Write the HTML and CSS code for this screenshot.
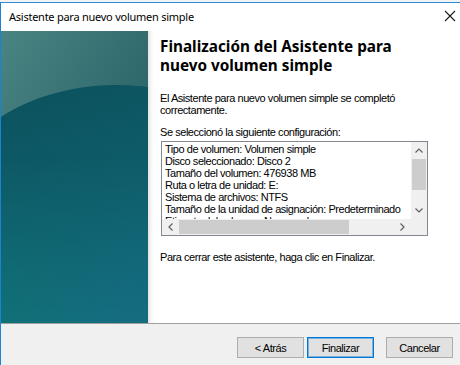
FILE: index.html
```html
<!DOCTYPE html>
<html lang="es">
<head>
<meta charset="utf-8">
<title>Asistente para nuevo volumen simple</title>
<link rel="stylesheet" href="styles.css">
</head>
<body>
<div class="window">
  <div class="titlebar">
    <span class="title">Asistente para nuevo volumen simple</span>
    <svg class="close" width="12" height="12" viewBox="0 0 12 12"><path d="M1 1 L11 11 M11 1 L1 11" stroke="#1a1a1a" stroke-width="1.1" fill="none"/></svg>
  </div>
  <div class="main">
    <div class="banner">
      <svg width="147" height="292" viewBox="0 0 147 292" preserveAspectRatio="none">
        <defs>
          <linearGradient id="top" gradientUnits="userSpaceOnUse" x1="0" y1="0" x2="147" y2="90">
            <stop offset="0" stop-color="#4a8482"/>
            <stop offset="1" stop-color="#2a6469"/>
          </linearGradient>
          <linearGradient id="dark" gradientUnits="userSpaceOnUse" x1="40" y1="55" x2="100" y2="292">
            <stop offset="0" stop-color="#0b525e"/>
            <stop offset="0.5" stop-color="#0f5f6c"/>
            <stop offset="1" stop-color="#13707c"/>
          </linearGradient>
          <linearGradient id="tint" gradientUnits="userSpaceOnUse" x1="0" y1="0" x2="147" y2="0">
            <stop offset="0" stop-color="#0e7a74" stop-opacity="0.35"/>
            <stop offset="1" stop-color="#1a5f8a" stop-opacity="0.25"/>
          </linearGradient>
          <linearGradient id="fade" gradientUnits="userSpaceOnUse" x1="0" y1="120" x2="0" y2="292">
            <stop offset="0" stop-color="#ffffff" stop-opacity="0"/>
            <stop offset="1" stop-color="#ffffff" stop-opacity="1"/>
          </linearGradient>
          <mask id="m"><rect width="147" height="292" fill="url(#fade)"/></mask>
        </defs>
        <rect width="147" height="292" fill="url(#top)"/>
        <path d="M0 86 C 30 66 70 55 112 54 C 128 54 140 55 147 56 L147 292 L0 292 Z" fill="url(#dark)"/>
        <rect width="147" height="292" fill="url(#tint)" mask="url(#m)"/>
      </svg>
    </div>
    <div class="content">
      <h1 class="heading">Finalización del Asistente para nuevo volumen simple</h1>
      <p class="intro">El Asistente para nuevo volumen simple se completó correctamente.</p>
      <p class="label">Se seleccionó la siguiente configuración:</p>
      <div class="listbox">
        <div class="list-text">
          <div class="line">Tipo de volumen: Volumen simple</div>
          <div class="line">Disco seleccionado: Disco 2</div>
          <div class="line">Tamaño del volumen: 476938 MB</div>
          <div class="line">Ruta o letra de unidad: E:</div>
          <div class="line">Sistema de archivos: NTFS</div>
          <div class="line">Tamaño de la unidad de asignación: Predeterminado</div>
          <div class="line">Etiqueta del volumen: Nuevo vol</div>
        </div>
        <div class="vscroll">
          <div class="arrow"><svg width="8" height="5" viewBox="0 0 8 5"><polyline points="0.5,4.5 4,1 7.5,4.5" fill="none" stroke="#606060" stroke-width="1.2"/></svg></div>
          <div class="vtrack"><div class="vthumb"></div></div>
          <div class="arrow"><svg width="8" height="5" viewBox="0 0 8 5"><polyline points="0.5,0.5 4,4 7.5,0.5" fill="none" stroke="#606060" stroke-width="1.2"/></svg></div>
        </div>
        <div class="hscroll">
          <div class="harrow"><svg width="5" height="8" viewBox="0 0 5 8"><polyline points="4.5,0.5 1,4 4.5,7.5" fill="none" stroke="#606060" stroke-width="1.2"/></svg></div>
          <div class="htrack"><div class="hthumb"></div></div>
          <div class="harrow"><svg width="5" height="8" viewBox="0 0 5 8"><polyline points="0.5,0.5 4,4 0.5,7.5" fill="none" stroke="#606060" stroke-width="1.2"/></svg></div>
        </div>
        <div class="corner"></div>
      </div>
      <p class="closing">Para cerrar este asistente, haga clic en Finalizar.</p>
    </div>
  </div>
  <div class="footer">
    <button class="btn">&lt; Atrás</button>
    <button class="btn btn-default">Finalizar</button>
    <button class="btn btn-cancel">Cancelar</button>
  </div>
</div>
</body>
</html>
```
FILE: styles.css
```css
* { box-sizing: border-box; }
html, body {
  margin: 0;
  padding: 0;
  width: 460px;
  height: 365px;
  overflow: hidden;
  background: #f3f3f3;
}
body {
  font-family: "Liberation Sans", Arial, sans-serif;
  font-size: 11px;
  letter-spacing: -0.45px;
  color: #000;
}
.window {
  margin-top: 2px;
  height: 363px;
  border-top: 1px solid #2b8ad8;
  border-left: 1px solid #1883d7;
  background: #fff;
  display: flex;
  flex-direction: column;
}
.titlebar {
  height: 28px;
  flex: none;
  display: flex;
  align-items: center;
  justify-content: space-between;
  padding: 0 4px 0 8px;
  background: #fff;
}
.title {
  font-family: "Noto Sans", "Open Sans", sans-serif;
  font-size: 11px;
  letter-spacing: -0.25px;
  color: #000;
  margin-top: -2px;
}
.close {
  margin-top: -3px;
}
.main {
  height: 292px;
  flex: none;
  display: flex;
}
.banner {
  width: 147px;
  flex: none;
  height: 292px;
}
.banner svg { display: block; }
.content {
  flex: 1;
  padding: 6px 0 0 12px;
  background: linear-gradient(to right, #e4e4e4 0, #f6f6f6 3px, #ffffff 6px);
}
.heading {
  margin: 0;
  font-family: "Noto Sans", "Open Sans", sans-serif;
  font-weight: 700;
  font-size: 15.3px;
  letter-spacing: 0;
  line-height: 19px;
  width: 250px;
}
.intro {
  margin: 17px 0 0 0;
  line-height: 12px;
  width: 250px;
}
.label {
  margin: 10px 0 0 0;
  line-height: 12px;
}
.listbox {
  margin: 3px 0 0 1px;
  width: 267px;
  height: 95px;
  border: 1px solid #828790;
  display: grid;
  grid-template-columns: 1fr 16px;
  grid-template-rows: 1fr 16px;
  background: #fff;
}
.list-text {
  overflow: hidden;
  padding: 1px 0 0 3px;
  line-height: 12px;
  white-space: nowrap;
}
.vscroll {
  background: #f0f0f0;
  display: flex;
  flex-direction: column;
}
.arrow {
  height: 17px;
  flex: none;
  display: flex;
  align-items: center;
  justify-content: center;
}
.arrow svg, .harrow svg { display: block; }
.vtrack {
  flex: 1;
}
.vthumb {
  height: 31px;
  margin: 0 1px;
  background: #cdcdcd;
}
.hscroll {
  background: #f0f0f0;
  display: flex;
  align-items: stretch;
}
.harrow {
  width: 17px;
  flex: none;
  display: flex;
  align-items: center;
  justify-content: center;
}
.htrack { flex: 1; }
.hthumb {
  width: 170px;
  height: 14px;
  margin-top: 1px;
  background: #cdcdcd;
}
.corner { background: #f0f0f0; }
.closing {
  margin: 15px 0 0 0;
  line-height: 12px;
}
.footer {
  flex: 1;
  border-top: 1px solid #a0a0a0;
  background: #f0f0f0;
  display: flex;
  justify-content: flex-end;
  align-items: flex-start;
  padding: 13px 7px 0 0;
}
.btn {
  width: 67px;
  height: 21px;
  border: 1px solid #adadad;
  background: #e1e1e1;
  font-family: "Liberation Sans", Arial, sans-serif;
  font-size: 11px;
  letter-spacing: -0.45px;
  color: #000;
  padding: 0;
  margin: 0 0 0 3px;
}
.btn-default {
  border-color: #0078d7;
  box-shadow: inset 0 0 0 1px rgba(0, 120, 215, 0.45);
}
.btn-cancel { margin-left: 12px; }
```
